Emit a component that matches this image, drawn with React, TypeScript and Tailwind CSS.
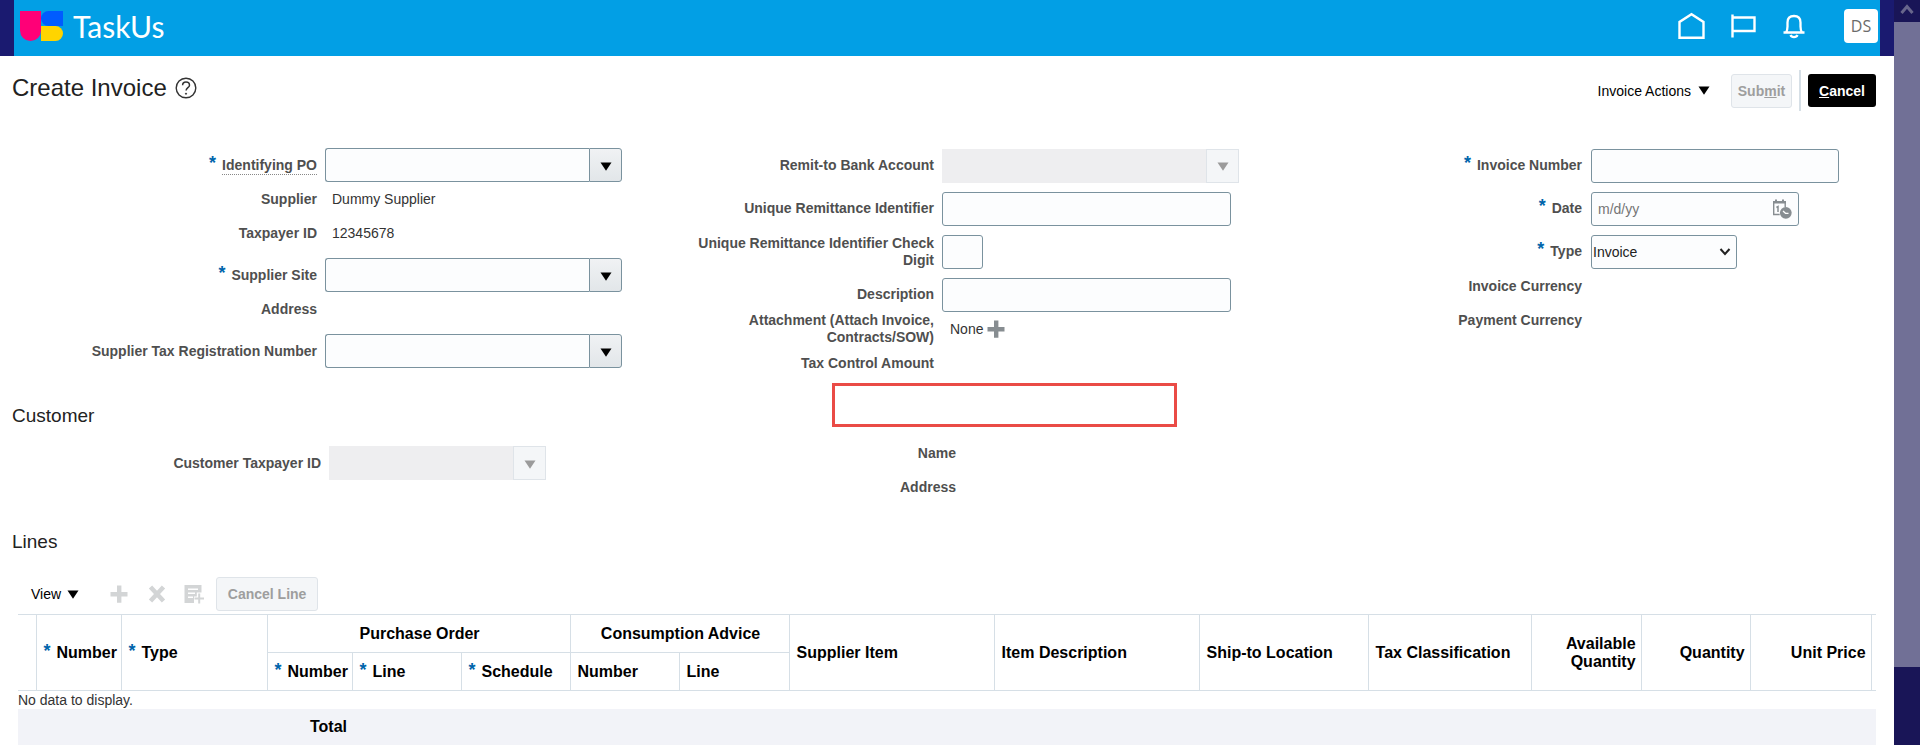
import type { ReactNode } from "react";

const LABEL = "text-sm leading-[17px] font-bold text-[#4f4f4f] text-right";
const INPUT = "h-[34px] rounded-[3px] border border-[#7a929e] bg-[#fcfdfe] px-[6px] text-sm text-[#333] placeholder:text-[#757575]";

function Required() {
  return (
    <span aria-hidden="true" className="mr-[6px] align-[1px] text-lg leading-[0] font-bold text-[#0065ab]">
      *
    </span>
  );
}

function Triangle({ className = "fill-black" }: { className?: string }) {
  return (
    <svg viewBox="0 0 12 9" className={`h-[9px] w-3 ${className}`} aria-hidden="true">
      <path d="M0.5 0.5h11L6 8.7z" />
    </svg>
  );
}

function Plus({ className }: { className: string }) {
  return (
    <svg viewBox="0 0 18 18" className={`size-[18px] ${className}`} aria-hidden="true">
      <path d="M7 0.5h4.4V7H17.5v4.4H11.4v6.3H7v-6.3H0.5V7H7z" />
    </svg>
  );
}

type RowProps = {
  label: ReactNode;
  id?: string;
  required?: boolean;
  tall?: boolean;
  labelWidth: string;
  gap?: string;
  children?: ReactNode;
};

function Row({ label, id, required, tall, labelWidth, gap = "gap-2", children }: RowProps) {
  return (
    <div className={`flex items-center ${tall ? "h-[43px]" : "h-[34px]"} ${gap}`}>
      <label htmlFor={id} className={`${LABEL} ${labelWidth} shrink-0`}>
        {required && <Required />}
        {label}
      </label>
      {children}
    </div>
  );
}

function Combo({ id, label, disabled, width = "w-[297px]" }: { id: string; label: string; disabled?: boolean; width?: string }) {
  return (
    <div className={`flex h-[34px] shrink-0 ${width}`}>
      <input
        id={id}
        type="text"
        disabled={disabled}
        className={
          disabled
            ? "min-w-0 flex-1 bg-[#eeeef0] px-[6px] text-sm"
            : "min-w-0 flex-1 rounded-l-[3px] border border-r-0 border-[#7a929e] bg-[#fcfdfe] px-[6px] text-sm"
        }
      />
      <button
        type="button"
        disabled={disabled}
        aria-label={`Search: ${label}`}
        className={
          disabled
            ? "flex w-[33px] items-center justify-center border border-[#dfe4e9] bg-[#f4f6f8]"
            : "flex w-[33px] items-center justify-center rounded-r-[3px] border border-[#7a929e] bg-linear-to-b from-[#f0f2f4] to-[#e2e6e9]"
        }
      >
        <Triangle className={disabled ? "mt-[2px] fill-[#9b9b9b]" : "mt-[2px] fill-black"} />
      </button>
    </div>
  );
}

function Header() {
  return (
    <header className="flex h-14 items-center border-x-[14px] border-[#1a1a70] bg-[#029fe5] pr-[2px] pb-1 pl-[6px]">
      <a href="#" className="flex items-center" aria-label="TaskUs home">
        <svg viewBox="0 0 43 30" className="h-[30px] w-[43px]" aria-hidden="true">
          <path d="M0 0h21v19.500a10.500 10.500 0 0 1-21 0z" fill="#ff0077" />
          <path d="M28.500 0H43v15H28.500a7.500 7.500 0 0 1 0-15z" fill="#005cff" />
          <path d="M21 15h14.500a7.500 7.500 0 0 1 0 15H21z" fill="#ffd400" />
        </svg>
        <span className="ml-[10px] font-[Lato,sans-serif] text-[30px] leading-none text-white">TaskUs</span>
      </a>
      <nav className="ml-auto flex items-center">
        <a href="#" aria-label="Home">
          <svg viewBox="0 0 28 28" className="mr-[25px] size-7 fill-none stroke-white stroke-[2.400]" aria-hidden="true">
            <path d="M2.500 25.800V10L14.500 2.200l12 7.800v15.800z" />
          </svg>
        </a>
        <a href="#" aria-label="Favorites">
          <svg viewBox="0 0 26 26" className="mr-[26px] size-[26px] fill-none stroke-white stroke-[2.400]" aria-hidden="true">
            <path d="M2.500 1.500v23M2.500 4.500h22v13.500h-22" />
          </svg>
        </a>
        <a href="#" aria-label="Notifications">
          <svg viewBox="0 0 24 26" className="mr-[38px] h-[26px] w-6 fill-none stroke-white stroke-[2.300]" aria-hidden="true">
            <path d="M1.500 19.500h21M4 19.500c1-1.500 1.500-3 1.500-6V9.500C5.500 5.500 8 3 12 3s6.500 2.500 6.500 6.500v4c0 3 .5 4.500 1.500 6M8.500 22a3.700 3 0 0 0 7 0" />
          </svg>
        </a>
        <button type="button" className="size-[34px] rounded-[4px] bg-white font-['Open_Sans',sans-serif] text-base text-[#6b6b6b]">
          DS
        </button>
      </nav>
    </header>
  );
}

function TitleBar() {
  return (
    <div className="flex items-start pt-[14px] pl-3">
      <h1 className="flex items-center pt-[2px] text-2xl text-[#222]">
        Create Invoice
        <button type="button" aria-label="Help" className="ml-2">
          <svg viewBox="0 0 22 22" className="size-[22px] fill-none stroke-[#333]" aria-hidden="true">
            <circle cx="11" cy="11" r="9.800" strokeWidth="1.400" />
            <path d="M7.600 8.300C7.600 6.300 9 5 11 5s3.500 1.300 3.500 3.200c0 2.400-3.400 2.600-3.400 5.300" strokeWidth="1.500" />
            <circle cx="11" cy="16.700" r="0.600" className="fill-[#333]" />
          </svg>
        </button>
      </h1>
      <div className="ml-auto flex items-center pr-[18px] text-sm">
        <button type="button" className="flex items-center gap-[7px] text-black">
          Invoice Actions
          <Triangle />
        </button>
        <button type="button" disabled className="ml-[21px] h-[34px] w-[61px] rounded-[3px] border border-[#dfe4e9] bg-[#f4f6f8] font-bold text-[#9e9e9e]">
          Sub<span className="underline">m</span>it
        </button>
        <div className="mx-[7px] h-[41px] w-[2px] bg-[#d6dfe6]" />
        <button type="button" className="h-[33px] w-[68px] rounded-[3px] bg-black font-bold text-white">
          <span className="underline">C</span>ancel
        </button>
      </div>
    </div>
  );
}

function InvoiceForm() {
  return (
    <div className="flex items-start pt-[37px]">
      <div className="w-[622px] shrink-0">
        <Row
          label={<span className="border-b border-dotted border-[#888] pb-px">Identifying PO</span>}
          id="po"
          required
          labelWidth="w-[317px]"
        >
          <Combo id="po" label="Identifying PO" />
        </Row>
        <Row label="Supplier" labelWidth="w-[317px]">
          <span className="pl-[7px] text-sm text-[#333]">Dummy Supplier</span>
        </Row>
        <Row label="Taxpayer ID" labelWidth="w-[317px]">
          <span className="pl-[7px] text-sm text-[#333]">12345678</span>
        </Row>
        <div className="pt-2">
          <Row label="Supplier Site" id="site" required labelWidth="w-[317px]">
            <Combo id="site" label="Supplier Site" />
          </Row>
        </div>
        <Row label="Address" labelWidth="w-[317px]" />
        <div className="pt-2">
          <Row label="Supplier Tax Registration Number" id="taxreg" labelWidth="w-[317px]">
            <Combo id="taxreg" label="Supplier Tax Registration Number" />
          </Row>
        </div>
      </div>

      <div className="-mt-1 flex-1">
        <Row label="Remit-to Bank Account" id="bank" tall labelWidth="w-[312px]">
          <Combo id="bank" label="Remit-to Bank Account" disabled />
        </Row>
        <Row label="Unique Remittance Identifier" id="uri" tall labelWidth="w-[312px]">
          <input id="uri" type="text" className={`${INPUT} w-[289px]`} />
        </Row>
        <Row label="Unique Remittance Identifier Check Digit" id="digit" tall labelWidth="w-[312px] pl-[60px]">
          <input id="digit" type="text" className={`${INPUT} w-[41px]`} />
        </Row>
        <Row label="Description" id="desc" tall labelWidth="w-[312px]">
          <input id="desc" type="text" className={`${INPUT} w-[289px]`} />
        </Row>
        <div className="-mt-1">
          <Row
            label={
              <>
                Attachment (Attach Invoice,
                <br />
                Contracts/SOW)
              </>
            }
            labelWidth="w-[312px]"
          >
            <span className="pl-2 text-sm text-[#333]">None</span>
            <button type="button" aria-label="Add attachment" className="-ml-1">
              <Plus className="fill-[#878d91]" />
            </button>
          </Row>
          <Row label="Tax Control Amount" labelWidth="w-[312px]" />
        </div>
      </div>

      <div className="-mt-1 w-[453px] shrink-0">
        <Row label="Invoice Number" id="number" required tall labelWidth="w-[141px]" gap="gap-[9px]">
          <input id="number" type="text" className={`${INPUT} w-[248px]`} />
        </Row>
        <Row label="Date" id="date" required tall labelWidth="w-[141px]" gap="gap-[9px]">
          <div className={`flex w-[208px] items-center justify-between ${INPUT}`}>
            <input id="date" type="text" placeholder="m/d/yy" className="w-[140px] text-sm outline-none placeholder:text-[#757575]" />
            <button type="button" aria-label="Select date and time">
              <svg viewBox="0 0 20 20" className="size-5" aria-hidden="true">
                <path d="M1.700 4v11.500h6M13.200 8V4" fill="none" stroke="#878d91" strokeWidth="1.400" />
                <path d="M1 2h2V.5h2V2h5V.5h2V2h2v2.500H1z" fill="#878d91" />
                <path d="M4.400 8.500l1.600-1v5.500" fill="none" stroke="#878d91" strokeWidth="1.500" />
                <circle cx="13.800" cy="13.800" r="5.900" fill="#878d91" />
                <path d="M11 12l2.500 2.300h3" fill="none" stroke="#fff" strokeWidth="1.200" />
              </svg>
            </button>
          </div>
        </Row>
        <Row label="Type" id="type" required tall labelWidth="w-[141px]" gap="gap-[9px]">
          <div className="relative">
            <select id="type" className="h-[34px] w-[146px] appearance-none rounded-[3px] border border-[#7a929e] bg-[#fcfdfe] pl-px text-sm text-[#222]">
              <option>Invoice</option>
            </select>
            <svg viewBox="0 0 12 8" className="pointer-events-none absolute top-[13px] right-[6px] h-2 w-3 fill-none stroke-[#222] stroke-2" aria-hidden="true">
              <path d="M1.500 1l4.500 5 4.500-5" />
            </svg>
          </div>
        </Row>
        <div className="-mt-1">
          <Row label="Invoice Currency" labelWidth="w-[141px]" />
          <Row label="Payment Currency" labelWidth="w-[141px]" />
        </div>
      </div>
    </div>
  );
}

function CustomerSection() {
  return (
    <section className="pt-[3px]">
      <div className="flex items-start">
        <h2 className="w-[832px] shrink-0 pt-[21px] pl-3 text-[19px] leading-6 text-[#222]">Customer</h2>
        <div className="h-11 w-[345px] border-[3px] border-[#ea4b46]" />
      </div>
      <div className="flex items-start">
        <div className="w-[617px] shrink-0 pt-[18px]">
          <Row label="Customer Taxpayer ID" id="customer" labelWidth="w-[321px]">
            <Combo id="customer" label="Customer Taxpayer ID" disabled width="w-[217px]" />
          </Row>
        </div>
        <div className="pt-2">
          <Row label="Name" labelWidth="w-[339px]" />
          <Row label="Address" labelWidth="w-[339px]" />
        </div>
      </div>
    </section>
  );
}

const TH = "border-r border-[#d6dfe6] pr-[5px] pl-[7px] font-bold leading-[18px] text-black";

function LinesTable() {
  return (
    <table className="w-full table-fixed border-collapse text-left text-base">
      <colgroup>
        <col className="w-[18px]" />
        <col className="w-[85px]" />
        <col className="w-[146px]" />
        <col className="w-[85px]" />
        <col className="w-[109px]" />
        <col className="w-[109px]" />
        <col className="w-[109px]" />
        <col className="w-[110px]" />
        <col className="w-[205px]" />
        <col className="w-[205px]" />
        <col className="w-[169px]" />
        <col className="w-[163px]" />
        <col className="w-[110px]" />
        <col className="w-[109px]" />
        <col className="w-[121px]" />
        <col />
      </colgroup>
      <thead className="border-y border-[#d6dfe6]">
        <tr className="h-[38px]">
          <td rowSpan={2} className={TH} />
          <th rowSpan={2} className={`${TH} whitespace-nowrap`}><Required />Number</th>
          <th rowSpan={2} className={TH}><Required />Type</th>
          <th colSpan={3} className={`${TH} border-b text-center`}>Purchase Order</th>
          <th colSpan={2} className={`${TH} border-b text-center`}>Consumption Advice</th>
          <th rowSpan={2} className={TH}>Supplier Item</th>
          <th rowSpan={2} className={TH}>Item Description</th>
          <th rowSpan={2} className={TH}>Ship-to Location</th>
          <th rowSpan={2} className={TH}>Tax Classification</th>
          <th rowSpan={2} className={`${TH} text-right`}>Available Quantity</th>
          <th rowSpan={2} className={`${TH} text-right`}>Quantity</th>
          <th rowSpan={2} className={`${TH} text-right`}>Unit Price</th>
          <td rowSpan={2} />
        </tr>
        <tr className="h-[38px]">
          <th className={`${TH} whitespace-nowrap`}><Required />Number</th>
          <th className={TH}><Required />Line</th>
          <th className={TH}><Required />Schedule</th>
          <th className={TH}>Number</th>
          <th className={TH}>Line</th>
        </tr>
      </thead>
      <tbody>
        <tr>
          <td colSpan={16} className="h-[18px] text-sm leading-[18px] text-[#333]">No data to display.</td>
        </tr>
        <tr className="h-9 bg-[#f2f3f8]">
          <td colSpan={4} className="pr-[5px] text-right font-bold text-black">Total</td>
          <td colSpan={12} />
        </tr>
      </tbody>
    </table>
  );
}

function LinesSection() {
  return (
    <section className="pt-[26px]">
      <h2 className="pl-3 text-[19px] leading-6 text-[#222]">Lines</h2>
      <div className="mt-[23px] mb-[3px] flex h-[34px] items-center pl-[31px] text-sm">
        <button type="button" className="flex items-center gap-[6px] text-black">
          View
          <Triangle />
        </button>
        <button type="button" disabled aria-label="Add Row" className="ml-[31px]">
          <Plus className="fill-[#d3d5d6]" />
        </button>
        <button type="button" disabled aria-label="Delete" className="ml-5">
          <svg viewBox="0 0 18 18" className="size-[18px] stroke-[#d3d5d6] stroke-[4.500]" aria-hidden="true">
            <path d="M2.500 2l13 14M15.500 2l-13 14" />
          </svg>
        </button>
        <button type="button" disabled aria-label="Duplicate" className="ml-[18px]">
          <svg viewBox="0 0 20 20" className="size-5" aria-hidden="true">
            <path d="M0.500 1h17v18H0.500z" fill="#d3d5d6" />
            <path d="M4 5.200h10M4 9.200h7M4 13.200h5" stroke="#fff" strokeWidth="1.400" />
            <path d="M12.800 8.500H20V20H10v-7.500h2.800z" fill="#fff" />
            <path d="M15.200 9.500v10M10.500 14.500h9.500" stroke="#d3d5d6" strokeWidth="2" />
          </svg>
        </button>
        <button type="button" disabled className="ml-3 h-[34px] w-[102px] rounded-[3px] border border-[#dfe4e9] bg-[#f4f6f8] font-bold text-[#9e9e9e]">
          Cancel Line
        </button>
      </div>
      <div className="px-[18px]">
        <LinesTable />
      </div>
    </section>
  );
}

function ScrollTrack() {
  return (
    <div className="flex w-[26px] shrink-0 flex-col bg-[#191557]" aria-hidden="true">
      <div className="flex h-[22px] items-center justify-center">
        <svg viewBox="0 0 14 12" className="-mt-1 h-3 w-[14px] fill-none stroke-[#68668c] stroke-[3]">
          <path d="M1.500 10L7 3.500l5.500 6.500" />
        </svg>
      </div>
      <div className="mb-[78px] flex-1 bg-[#717096]" />
    </div>
  );
}

export default function App() {
  return (
    <div className="flex min-h-screen bg-white font-['Liberation_Sans',Arial,sans-serif]">
      <main className="min-w-0 flex-1">
        <Header />
        <TitleBar />
        <InvoiceForm />
        <CustomerSection />
        <LinesSection />
      </main>
      <ScrollTrack />
    </div>
  );
}
